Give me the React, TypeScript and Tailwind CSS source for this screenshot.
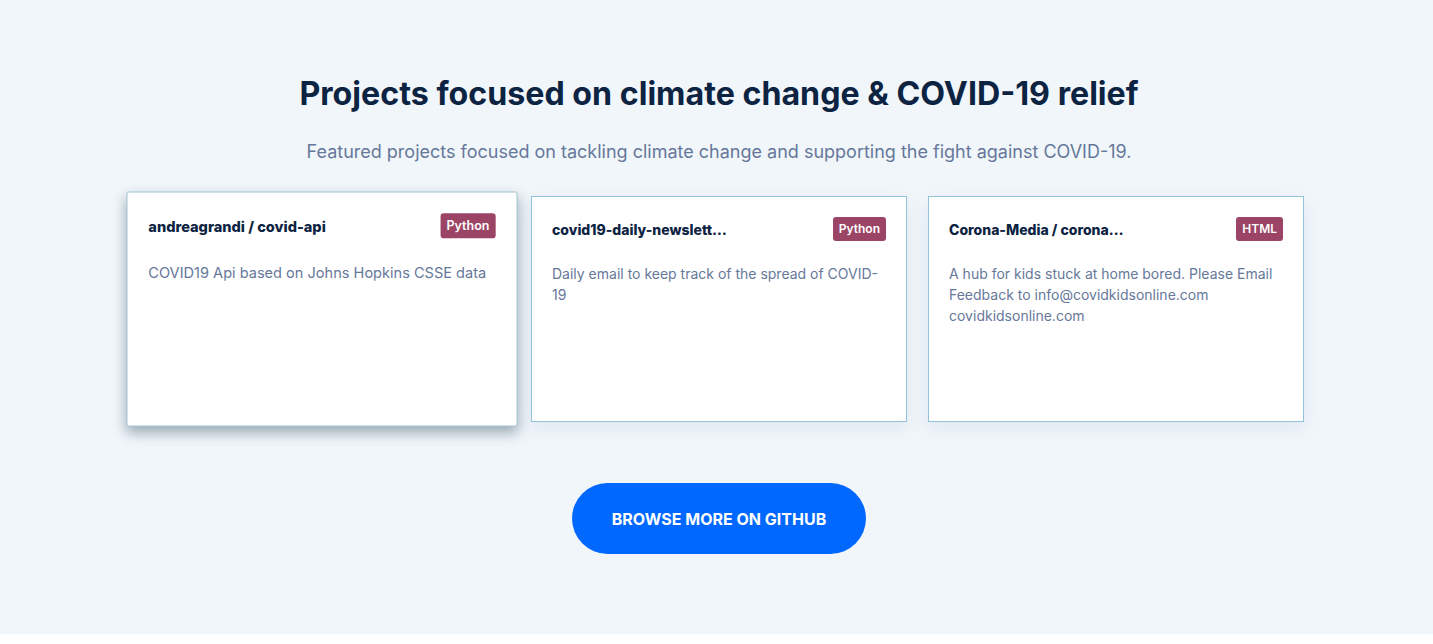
import React from "react";

const cards = [
  {
    title: "andreagrandi / covid-api",
    lang: "Python",
    desc: "COVID19 Api based on Johns Hopkins CSSE data",
    active: true,
  },
  {
    title: "covid19-daily-newsletter / covid19-daily-newsletter",
    lang: "Python",
    desc: "Daily email to keep track of the spread of COVID-19",
    active: false,
  },
  {
    title: "Corona-Media / corona-kids-online",
    lang: "HTML",
    desc: "A hub for kids stuck at home bored. Please Email Feedback to info@covidkidsonline.com covidkidsonline.com",
    active: false,
  },
];

export default function App() {
  return (
    <div className="w-full h-[644px] bg-white" style={{ fontFamily: "Inter, 'Noto Sans', sans-serif" }}>
      <div className="h-[634px] bg-[#f1f6fa] pl-[5px] pt-[74px] flex flex-col items-center">
        <h2 className="text-[32.2px] leading-[40px] font-bold text-[#0d2342]">
          Projects focused on climate change &amp; COVID-19 relief
        </h2>
        <p className="mt-[26px] text-[18px] leading-[24px] text-[#66789a]">
          Featured projects focused on tackling climate change and supporting the fight against COVID-19.
        </p>
        <div className="mt-[32px] flex gap-[21px]">
          {cards.map((c) => (
            <div
              key={c.title}
              className={
                c.active
                  ? "w-[376px] h-[226px] bg-white border border-[#a7c6d4] rounded-[2px] px-[20px] pt-[20px] scale-[1.04] shadow-[0_6px_12px_rgba(50,80,100,0.45)]"
                  : "w-[376px] h-[226px] bg-white border border-[#90c3dc] px-[20px] pt-[20px] shadow-[0_6px_18px_rgba(90,130,160,0.12)]"
              }
            >
              <div className="flex items-start justify-between">
                <div className="mt-[3px] max-w-[175px] truncate text-[14px] leading-[20px] font-extrabold text-[#0d2342]">
                  {c.title}
                </div>
                <span className="h-[24px] px-[6px] rounded-[3px] bg-[#9b4466] text-white text-[12px] font-semibold leading-[24px]">
                  {c.lang}
                </span>
              </div>
              <p className="mt-[22px] text-[14px] leading-[21px] text-[#66789a]">{c.desc}</p>
            </div>
          ))}
        </div>
        <button className="mt-[61px] w-[294px] h-[71px] rounded-full bg-[#0068ff] text-white text-[16px] font-bold uppercase">
          Browse more on GitHub
        </button>
      </div>
    </div>
  );
}
